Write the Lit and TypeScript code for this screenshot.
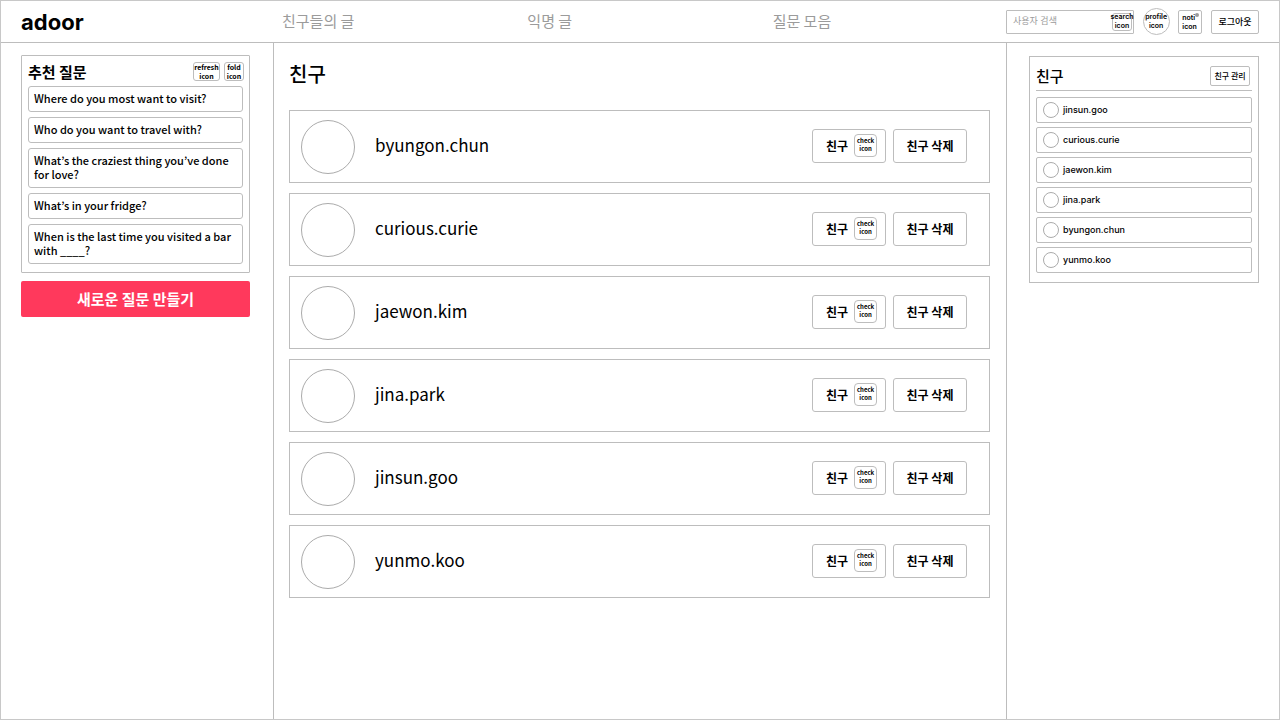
import { LitElement, html, css } from "lit";
import { customElement, property } from "lit/decorators.js";

const QUESTIONS = [
  "Where do you most want to visit?",
  "Who do you want to travel with?",
  "What’s the craziest thing you’ve done for love?",
  "What’s in your fridge?",
  "When is the last time you visited a bar with ____?",
];

const FRIENDS = ["byungon.chun", "curious.curie", "jaewon.kim", "jina.park", "jinsun.goo", "yunmo.koo"];

const SIDE_FRIENDS = ["jinsun.goo", "curious.curie", "jaewon.kim", "jina.park", "byungon.chun", "yunmo.koo"];

const base = css`
  * {
    box-sizing: border-box;
  }
  button,
  input {
    font: inherit;
    color: inherit;
    margin: 0;
    padding: 0;
    border: 1px solid #bdbdbd;
    background: #fff;
  }
  button {
    cursor: pointer;
  }
  a {
    color: inherit;
    text-decoration: none;
  }
  h1,
  h2,
  ul {
    margin: 0;
    padding: 0;
  }
  ul {
    list-style: none;
  }
`;

@customElement("app-header")
class AppHeader extends LitElement {
  static styles = [
    base,
    css`
      :host {
        display: block;
        border-bottom: 1px solid #bdbdbd;
      }
      .bar {
        display: grid;
        grid-template-columns: 272px 1fr 273px;
        align-items: center;
        height: 41px;
      }
      .logo {
        padding-left: 20px;
        font: 700 22px/26px Inter, sans-serif;
      }
      .nav {
        display: grid;
        grid-template-columns: repeat(3, 1fr);
        padding: 0 0 2px 9px;
        margin-right: -12px;
        font-size: 15px;
        line-height: 24px;
        color: #9b9b9b;
      }
      .tools {
        display: flex;
        align-items: center;
        justify-content: space-between;
        padding-right: 20px;
        font-family: Inter, "Noto Sans CJK KR", sans-serif;
        font-weight: 500;
      }
      .search {
        display: flex;
        align-items: center;
        width: 128px;
        height: 24px;
        border: 1px solid #bdbdbd;
        border-radius: 1px;
      }
      .search input {
        flex: 1;
        min-width: 0;
        border: 0;
        padding: 0 0 2px 6px;
        font-size: 9px;
        font-weight: 400;
        outline: none;
        background: none;
      }
      .search input::placeholder {
        color: #9b9b9b;
        opacity: 1;
      }
      .icon {
        display: flex;
        align-items: center;
        justify-content: center;
        height: 24px;
        width: 24px;
        padding-bottom: 2px;
        border-radius: 2px;
        font-size: 7px;
        font-weight: 600;
        line-height: 9px;
        text-align: center;
        white-space: nowrap;
      }
      .icon.find {
        width: 20px;
        height: 18px;
        margin-right: 1px;
        border-radius: 3px;
      }
      .icon.round {
        width: 27px;
        height: 27px;
        border-radius: 50%;
      }
      .icon.noti {
        position: relative;
        justify-content: flex-start;
        padding: 0 0 0 3px;
        text-align: left;
      }
      .dot {
        position: absolute;
        top: 2px;
        right: 2px;
        width: 4px;
        height: 4px;
        border-radius: 50%;
        background: #9b9b9b;
      }
      .logout {
        width: 48px;
        height: 24px;
        border-radius: 2px;
        font-size: 9px;
      }
    `,
  ];
  render() {
    return html`<header class="bar">
      <a class="logo" href="#">adoor</a>
      <nav class="nav">
        <a href="#">친구들의 글</a>
        <a href="#">익명 글</a>
        <a href="#">질문 모음</a>
      </nav>
      <div class="tools">
        <div class="search">
          <input type="text" placeholder="사용자 검색" aria-label="사용자 검색" />
          <button class="icon find">search<br />icon</button>
        </div>
        <button class="icon round">profile<br />icon</button>
        <button class="icon noti">noti<br />icon<span class="dot"></span></button>
        <button class="logout">로그아웃</button>
      </div>
    </header>`;
  }
}

@customElement("question-panel")
class QuestionPanel extends LitElement {
  static styles = [
    base,
    css`
      :host {
        display: flex;
        flex-direction: column;
        gap: 8px;
        padding: 12px 23px 0 20px;
      }
      .panel {
        border: 1px solid #bdbdbd;
        border-radius: 1px;
        padding: 6px 6px 8px;
      }
      .head {
        display: flex;
        align-items: center;
        gap: 4px;
        margin: 0 -1px 5px 0;
      }
      .head h2 {
        flex: 1;
        font-size: 15px;
        line-height: 19px;
        font-weight: 700;
      }
      .icon {
        display: flex;
        align-items: center;
        justify-content: center;
        width: 20px;
        height: 19px;
        border-radius: 3px;
        font-size: 7px;
        line-height: 9px;
        font-weight: 700;
      }
      .icon.wide {
        width: 27px;
      }
      .list {
        display: flex;
        flex-direction: column;
        gap: 5px;
      }
      .question {
        display: block;
        border: 1px solid #bdbdbd;
        border-radius: 3px;
        padding: 4px 5px 6px;
        font-size: 11px;
        line-height: 14px;
        font-weight: 500;
      }
      .create {
        height: 36px;
        padding-bottom: 2px;
        border: 0;
        border-radius: 2px;
        background: #ff395c;
        color: #fff;
        font-size: 15px;
        font-weight: 700;
      }
    `,
  ];
  render() {
    return html`<section class="panel">
        <div class="head">
          <h2>추천 질문</h2>
          <button class="icon wide">refresh<br />icon</button>
          <button class="icon">fold<br />icon</button>
        </div>
        <ul class="list">
          ${QUESTIONS.map((q) => html`<li><a class="question" href="#">${q}</a></li>`)}
        </ul>
      </section>
      <button class="create">새로운 질문 만들기</button>`;
  }
}

@customElement("friend-card")
class FriendCard extends LitElement {
  @property() name = "";
  static styles = [
    base,
    css`
      :host {
        display: flex;
        align-items: center;
        height: 73px;
        padding: 0 22px 0 11px;
        border: 1px solid #bdbdbd;
      }
      .avatar {
        width: 54px;
        height: 54px;
        border: 1px solid #ababab;
        border-radius: 50%;
        margin-right: 20px;
      }
      .name {
        flex: 1;
        font-size: 17px;
        line-height: 24px;
        padding-bottom: 4px;
      }
      .actions {
        display: flex;
        gap: 7px;
        padding-bottom: 2px;
        font-size: 12px;
        font-weight: 700;
      }
      .action {
        display: flex;
        align-items: center;
        justify-content: center;
        gap: 6px;
        width: 74px;
        height: 34px;
        border-radius: 3px;
      }
      .action.state {
        padding-left: 5px;
      }
      .check {
        width: 23px;
        height: 23px;
        padding-top: 2px;
        border: 1px solid #bdbdbd;
        border-radius: 4px;
        font-size: 6px;
        line-height: 8px;
      }
    `,
  ];
  render() {
    return html`<div class="avatar"></div>
      <a class="name" href="#">${this.name}</a>
      <div class="actions">
        <button class="action state">친구<span class="check">check<br />icon</span></button>
        <button class="action">친구 삭제</button>
      </div>`;
  }
}

@customElement("friend-panel")
class FriendPanel extends LitElement {
  static styles = [
    base,
    css`
      :host {
        display: block;
        padding: 13px 20px 0 22px;
      }
      .panel {
        border: 1px solid #bdbdbd;
        padding: 9px 6px 9px;
      }
      .head {
        display: flex;
        align-items: center;
        justify-content: space-between;
        padding: 0 2px 4px 0;
        margin-bottom: 6px;
        border-bottom: 1px solid #bdbdbd;
      }
      .head h2 {
        font-size: 15px;
        line-height: 20px;
        font-weight: 500;
      }
      .manage {
        width: 40px;
        height: 20px;
        padding-bottom: 2px;
        border-radius: 2px;
        font-size: 8px;
        font-weight: 500;
      }
      .list {
        display: flex;
        flex-direction: column;
        gap: 4px;
      }
      .friend {
        display: flex;
        align-items: center;
        gap: 4px;
        height: 26px;
        padding: 0 0 1px 6px;
        border: 1px solid #bdbdbd;
        border-radius: 2px;
        font: 500 9px/14px Inter, sans-serif;
      }
      .avatar {
        width: 16px;
        height: 16px;
        border: 1px solid #ababab;
        border-radius: 50%;
      }
    `,
  ];
  render() {
    return html`<section class="panel">
      <div class="head">
        <h2>친구</h2>
        <button class="manage">친구 관리</button>
      </div>
      <ul class="list">
        ${SIDE_FRIENDS.map(
          (f) => html`<li><a class="friend" href="#"><span class="avatar"></span>${f}</a></li>`
        )}
      </ul>
    </section>`;
  }
}

@customElement("app-root")
class AppRoot extends LitElement {
  static styles = [
    base,
    css`
      :host {
        display: flex;
        flex-direction: column;
        box-sizing: border-box;
        min-height: 100vh;
        border: 1px solid #c8c8c8;
        background: #fff;
        color: #000;
        font-family: "Noto Sans CJK KR", sans-serif;
      }
      .columns {
        flex: 1;
        display: grid;
        grid-template-columns: 272px 1fr 272px;
      }
      .main {
        border: solid #bdbdbd;
        border-width: 0 1px;
        padding: 16px 16px 0 15px;
      }
      .title {
        font-size: 20px;
        line-height: 30px;
        font-weight: 500;
        margin-bottom: 21px;
      }
      .cards {
        display: grid;
        gap: 10px;
      }
    `,
  ];
  render() {
    return html`<app-header></app-header>
      <div class="columns">
        <question-panel></question-panel>
        <main class="main">
          <h1 class="title">친구</h1>
          <div class="cards">${FRIENDS.map((f) => html`<friend-card .name=${f}></friend-card>`)}</div>
        </main>
        <friend-panel></friend-panel>
      </div>`;
  }
}
